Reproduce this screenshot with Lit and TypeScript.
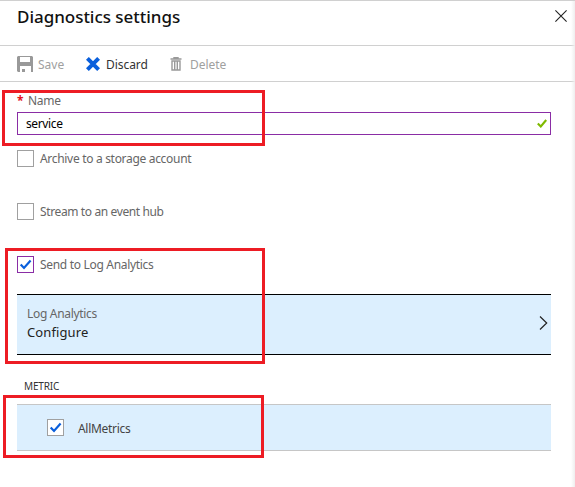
import { LitElement, html, css, svg } from "lit";
import { customElement, property } from "lit/decorators.js";
import { classMap } from "lit/directives/class-map.js";

@customElement("check-box")
class CheckBox extends LitElement {
  @property({ type: Boolean }) checked = false;
  @property({ type: Boolean }) edited = false;
  static styles = css`
    :host { display: block; flex: none; width: 17px; height: 17px; }
    .box { box-sizing: border-box; width: 17px; height: 17px; border: 1px solid #a0a0a0; background: #fff; }
    .edited { border-color: #8a2da5; }
    svg { display: block; }
  `;
  render() {
    return html`<div class=${classMap({ box: true, edited: this.edited })}>
      ${this.checked
        ? html`<svg width="15" height="15" viewBox="0 0 15 15">${svg`<path d="M2.7 7.6L6 11L12.6 3.6" fill="none" stroke="#0a5fdc" stroke-width="2.2"/>`}</svg>`
        : ""}
    </div>`;
  }
}

@customElement("app-root")
class AppRoot extends LitElement {
  static styles = css`
    :host {
      display: block; position: relative; box-sizing: border-box; width: 575px; height: 487px;
      overflow: hidden; background: #fff; border-top: 1px solid #d0d0d0;
      font: 12px/16px "Noto Sans", "Open Sans", sans-serif; color: #666; white-space: nowrap;
    }
    .edge { position: absolute; right: 0; top: 0; bottom: 0; width: 4px; background: linear-gradient(to right, transparent, #eee); }
    header { display: flex; justify-content: space-between; box-sizing: border-box; padding: 4px 8px 0 17px; border-bottom: 1px solid #d0d0d0; height: 45px; }
    h1 { margin: 0; font-size: 17px; line-height: 24px; font-weight: 500; color: #111; letter-spacing: -0.03px; }
    .close { margin-top: 5px; }
    nav { display: flex; align-items: center; box-sizing: border-box; height: 36px; padding-left: 17px; border-bottom: 1px solid #d0d0d0; color: #a0a0a0; }
    nav span { display: block; position: relative; top: 1px; }
    .save { width: 48px; margin-left: 5px; }
    .discard { width: 64px; margin-left: 6px; color: #333; letter-spacing: -0.05px; }
    .delete { margin-left: 8px; letter-spacing: -0.05px; }
    main { padding: 11px 24px 0 17px; }
    .label { display: flex; height: 19px; letter-spacing: -0.3px; }
    .star { width: 11px; color: #e3101c; font-weight: 700; }
    .field { display: flex; box-sizing: border-box; align-items: center; justify-content: space-between; height: 23px; border: 1px solid #8a2da5; padding: 0 3px 0 8px; color: #000; letter-spacing: -0.38px; }
    .option { display: flex; align-items: center; gap: 6px; height: 17px; margin-top: 36px; letter-spacing: -0.31px; }
    .first { margin-top: 15px; }
    .stream { letter-spacing: -0.38px; }
    .link { display: flex; box-sizing: border-box; align-items: center; justify-content: space-between; height: 61px; margin-top: 21px; padding: 0 3px 2px 10px; background: #dceffe; border: solid #000; border-width: 1px 0; letter-spacing: -0.31px; }
    .chevron { position: relative; top: -1px; }
    .value { display: block; font-size: 13px; line-height: 20px; color: #222; letter-spacing: 0.1px; }
    .heading { margin: 23px 0 0 7px; height: 26px; font-size: 10px; color: #333; letter-spacing: -0.15px; }
    .row { display: flex; box-sizing: border-box; align-items: center; height: 47px; padding-left: 30px; gap: 14px; background: #dceffe; border: solid #c6c6c6; border-width: 1px 0; color: #444; letter-spacing: -0.3px; }
    .metric { position: relative; top: 1px; }
    .mark { position: absolute; box-sizing: border-box; border: 3px solid #ed1c24; }
    .m1 { left: 2px; top: 89px; width: 263px; height: 56px; }
    .m2 { left: 5px; top: 247px; width: 260px; height: 116px; }
    .m3 { left: 3px; top: 394px; width: 261px; height: 63px; }
    svg { display: block; flex: none; }
  `;
  render() {
    return html`
      <header>
        <h1>Diagnostics settings</h1>
        <svg class="close" width="12" height="12" viewBox="0 0 12 12"><path d="M.4 .4L11.6 11.6M11.6 .4L.4 11.6" fill="none" stroke="#222" stroke-width="1.1"/></svg>
      </header>
      <nav>
        <svg width="16" height="16" viewBox="0 0 16 16"><path fill="#999" fill-rule="evenodd" d="M1 0H15L16 1V16H14V10H3V16H1L0 15V1ZM3 1V6H13V1ZM5 13H8V16H5Z"/></svg>
        <span class="save">Save</span>
        <svg width="14" height="14" viewBox="0 0 14 14"><path d="M1.4 1.4L12.6 12.6M12.6 1.4L1.4 12.6" fill="none" stroke="#0a5fdc" stroke-width="4"/></svg>
        <span class="discard">Discard</span>
        <svg width="12" height="14" viewBox="0 0 12 14"><path d="M.5 2H11.5M4 1.7V.6H8V1.7M2 4V13H10V4ZM4.7 4V12.5M7.3 4V12.5" fill="none" stroke="#999" stroke-width="1.4"/></svg>
        <span class="delete">Delete</span>
      </nav>
      <main>
        <div class="label"><span class="star">*</span><span>Name</span></div>
        <div class="field"><span>service</span>
          <svg width="10" height="9" viewBox="0 0 10 9"><path d="M.8 4.5L3.8 7.5L9.2 1" fill="none" stroke="#7fba00" stroke-width="2.1"/></svg>
        </div>
        <div class="option first"><check-box></check-box><span>Archive to a storage account</span></div>
        <div class="option stream"><check-box></check-box><span>Stream to an event hub</span></div>
        <div class="option"><check-box checked edited></check-box><span>Send to Log Analytics</span></div>
        <div class="link">
          <div><span>Log Analytics</span><span class="value">Configure</span></div>
          <svg class="chevron" width="9" height="14" viewBox="0 0 9 14"><path d="M1 .5L7.7 7L1 13.5" fill="none" stroke="#222" stroke-width="1.2"/></svg>
        </div>
        <div class="heading">METRIC</div>
        <div class="row"><check-box checked></check-box><span class="metric">AllMetrics</span></div>
      </main>
      <div class="edge"></div>
      <div class="mark m1"></div><div class="mark m2"></div><div class="mark m3"></div>
    `;
  }
}
